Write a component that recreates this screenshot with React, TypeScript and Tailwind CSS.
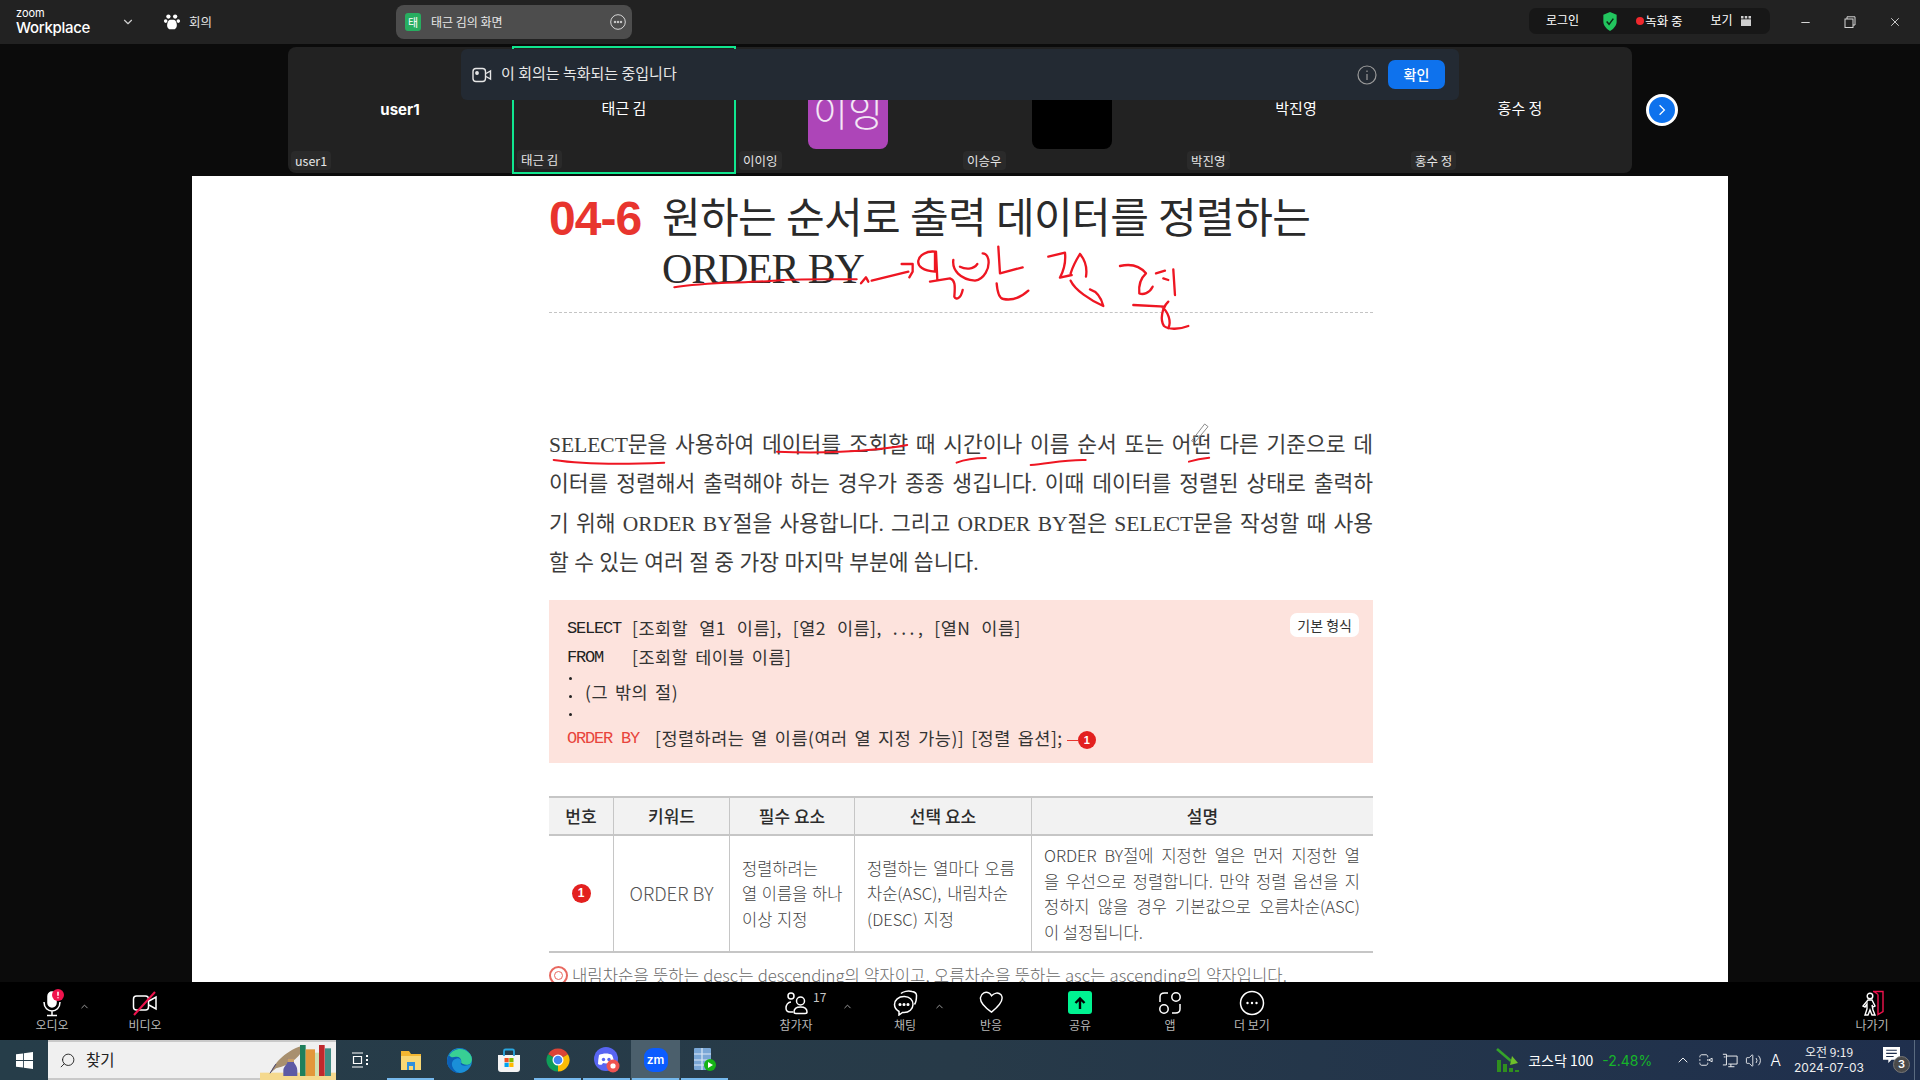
import { ChevronDown, ChevronUp, Search, Volume2, Minus, X } from "lucide-react";
import type { ReactNode } from "react";

const UI = "font-['Noto_Sans_CJK_KR','Noto_Sans',sans-serif]";
const BOOK = "font-['Liberation_Serif','Noto_Sans_CJK_KR',serif]";
const MONO = "font-['Liberation_Mono','Noto_Sans_CJK_KR',monospace]";
const CODE_KR = "font-['Noto_Sans_CJK_KR'] text-[17.5px] tracking-[0.5px] [word-spacing:2.5px]";

const tiles = [
  { name: "user1", label: "user1", bold: true },
  { name: "태근 김", label: "태근 김", active: true },
  { name: "", label: "이이잉", avatar: "purple" },
  { name: "", label: "이승우", avatar: "black" },
  { name: "박진영", label: "박진영" },
  { name: "홍수 정", label: "홍수 정" },
];

const bodyLines = [
  "SELECT문을 사용하여 데이터를 조회할 때 시간이나 이름 순서 또는 어떤 다른 기준으로 데",
  "이터를 정렬해서 출력해야 하는 경우가 종종 생깁니다. 이때 데이터를 정렬된 상태로 출력하",
  "기 위해 ORDER BY절을 사용합니다. 그리고 ORDER BY절은 SELECT문을 작성할 때 사용",
];

const descLines = [
  "ORDER BY절에 지정한 열은 먼저 지정한 열",
  "을 우선으로 정렬합니다. 만약 정렬 옵션을 지",
  "정하지 않을 경우 기본값으로 오름차순(ASC)",
];

const TopBar = () => (
  <header className="h-[44px] shrink-0 bg-[#222222] flex items-center text-white">
    <div className="pl-[16px] w-[116px] flex flex-col leading-none">
      <span className="text-[11px] font-['Inter'] leading-[11px]">zoom</span>
      <span className="text-[15px] font-['Inter'] font-medium leading-[17px] -tracking-[0.3px]">Workplace</span>
    </div>
    <ChevronDown className="w-[14px] h-[14px] text-[#cfcfcf] ml-[5px]" />
    <svg viewBox="0 0 20 20" className="w-[18px] h-[18px] ml-[28px] fill-white">
      <circle cx="6" cy="4" r="2.4" />
      <circle cx="13.5" cy="4" r="2.4" />
      <circle cx="3" cy="9" r="2" />
      <circle cx="17" cy="9" r="2" />
      <path d="M6 9c0-2 8-2 8 0 2 3 2 8-1 9H7c-3-1-3-6-1-9z" />
    </svg>
    <span className="ml-[8px] text-[12.5px] text-[#e4e4e4]">회의</span>
    <div className="ml-[184px] w-[236px] h-[34px] rounded-[8px] bg-[#4d4d4d] flex items-center px-[9px]">
      <span className="w-[16px] h-[18px] rounded-[3px] bg-[#27ae60] text-[11px] flex items-center justify-center">태</span>
      <span className="ml-[10px] text-[12px] text-[#e8e8e8] flex-1">태근 김의 화면</span>
      <svg viewBox="0 0 16 16" className="w-[16px] h-[16px] -mr-[3px] fill-none stroke-[#d8d8d8]">
        <circle cx="8" cy="8" r="7.3" />
        <circle cx="5" cy="8" r="0.8" fill="#d8d8d8" />
        <circle cx="8" cy="8" r="0.8" fill="#d8d8d8" />
        <circle cx="11" cy="8" r="0.8" fill="#d8d8d8" />
      </svg>
    </div>
    <div className="ml-[897px] w-[241px] h-[26px] rounded-[7px] bg-[#171717] flex items-center text-[12px] pl-[17px] -mt-[2px]">
      <span className="-mt-[2px]">로그인</span>
      <svg viewBox="0 0 16 20" className="w-[16px] h-[19px] ml-[23px]">
        <path d="M8 0l7 3v7c0 5-4 8-7 10-3-2-7-5-7-10V3z" fill="#22c55e" />
        <path d="M4.5 10l2.5 3 4.5-6" fill="none" stroke="#0b2b16" strokeWidth="1.6" />
      </svg>
      <span className="w-[8px] h-[8px] rounded-full bg-[#f0282d] ml-[18px]" />
      <span className="ml-[1px] text-[12.5px]">녹화 중</span>
      <span className="ml-[28px] -mt-[2px]">보기</span>
      <svg viewBox="0 0 12 12" className="w-[10px] h-[12px] ml-[8px] fill-[#cfcfcf]">
        <rect x="0" y="4" width="12" height="8" />
        <rect x="0" y="0" width="3" height="3" />
        <rect x="4.5" y="0" width="3" height="3" />
        <rect x="9" y="0" width="3" height="3" />
      </svg>
    </div>
    <Minus className="w-[13px] h-[13px] ml-[29px] text-[#d5d5d5]" />
    <svg viewBox="0 0 12 12" className="w-[12px] h-[12px] ml-[32px] fill-none stroke-[#d5d5d5]">
      <rect x="1" y="3" width="8" height="8.5" />
      <path d="M3 3V0.8h8V9H9" />
    </svg>
    <X className="w-[14px] h-[14px] ml-[32px] text-[#e0e0e0]" strokeWidth={1.5} />
  </header>
);

const Strip = () => (
  <div className="mt-[3px] pl-[288px] flex items-center gap-[14px]">
    <div className="relative w-[1344px] h-[126px] rounded-[8px] bg-[#222222] flex text-white">
      {tiles.map((t) => (
        <div
          key={t.label}
          className={`relative w-[224px] flex items-center justify-center ${t.active ? "border-2 border-[#10e68f] -my-px" : ""}`}
        >
          <div className="absolute left-[3px] bottom-[3px] h-[19px] px-[4px] rounded-[4px] bg-[#2a2a2a] text-[12.5px] leading-[19px] text-[#e6e6e6]">
            {t.label}
          </div>
          {t.avatar === "purple" && (
            <div className="mt-[-2px] w-[80px] h-[80px] rounded-[8px] bg-[#ad45b8] flex items-center justify-center text-[38px] text-[#f3e6f5] font-light">
              이잉
            </div>
          )}
          {t.avatar === "black" && <div className="mt-[-2px] w-[80px] h-[80px] rounded-[8px] bg-black" />}
          {t.name && (
            <span className={`text-[15px] ${t.bold ? "font-bold font-['Inter'] text-[14px] mt-[0px]" : "mt-[-3px]"}`}>{t.name}</span>
          )}
        </div>
      ))}
      <div className="absolute z-10 left-[173px] top-[2px] w-[998px] h-[51px] rounded-[6px] bg-[#232a33] flex items-center pl-[11px] pr-[14px]">
        <svg viewBox="0 0 20 16" className="w-[20px] h-[16px] fill-none stroke-[#e6e6e6]" strokeWidth="1.4">
          <rect x="1" y="1.5" width="12.5" height="13" rx="3" />
          <circle cx="5" cy="6" r="1.2" fill="#e6e6e6" />
          <path d="M14 6.5l4.5-2.5v8L14 9.5" />
        </svg>
        <span className="ml-[9px] -mt-[2px] text-[15px] text-[#e8e8e8] flex-1">이 회의는 녹화되는 중입니다</span>
        <svg viewBox="0 0 20 20" className="w-[20px] h-[20px] fill-none stroke-[#9a9a9a]" strokeWidth="1.2">
          <circle cx="10" cy="10" r="9" />
          <path d="M10 9v6M10 5.5v1.5" />
        </svg>
        <button className="ml-[11px] w-[57px] h-[29px] rounded-[7px] bg-[#0e72ed] text-[14px] font-medium">확인</button>
      </div>
    </div>
    <button className="w-[32px] h-[32px] rounded-full bg-[#0e72ed] border-[3px] border-white flex items-center justify-center">
      <svg viewBox="0 0 10 16" className="w-[8px] h-[14px] fill-none stroke-white" strokeWidth="1.6">
        <path d="M2 2l6 6-6 6" />
      </svg>
    </button>
  </div>
);

// annotation strokes, drawn in zoomed-crop coordinates
const Redpen = () => (
  <svg viewBox="192 176 1536 806" className="absolute inset-0 w-[1536px] h-[806px] pointer-events-none">
    <g fill="none" stroke="#ee1622" strokeLinecap="round" strokeLinejoin="round">
      <g transform="translate(520 170) scale(0.5612 0.3333)">
        <path vectorEffect="non-scaling-stroke" strokeWidth="2" d="M275 352C330 335 400 340 450 332 500 325 560 328 600 328" />
        <path vectorEffect="non-scaling-stroke" strokeWidth="2" d="M60 870C120 885 200 882 257 878M458 845C520 850 620 848 690 825M778 878C790 870 810 864 830 864M910 885C940 882 970 868 1008 870M1192 875C1205 868 1215 865 1228 863" />
        <path vectorEffect="non-scaling-stroke" stroke="#8d8d8d" strokeWidth="1" d="M1197 812L1220 762 1226 770 1203 816z" />
      </g>
      <g transform="translate(860 240) scale(0.3333)" strokeWidth="7">
        <path d="M3 130L18 112 25 125M35 122L145 95M125 72H158V95L148 112" />
        <path d="M225 35C200 32 178 45 175 62 172 80 190 92 225 95V35M228 35L232 120M210 125L270 115C285 120 286 135 283 170 288 180 302 178 308 150" />
        <path d="M280 60C276 90 300 118 345 122 372 118 390 85 385 58 382 45 375 40 368 40M300 80C315 88 340 90 352 72" />
        <path d="M415 20L420 100 488 82M410 130C412 155 418 175 430 177 455 182 480 175 505 152" />
        <path d="M565 50L615 38C618 65 612 90 600 113L635 105M660 42C650 58 640 75 632 100M660 42C675 60 682 85 678 110M632 122C645 150 690 180 730 198 725 178 712 155 690 148" />
        <path d="M780 78C805 72 835 72 858 100 845 112 835 130 838 160 850 165 868 160 878 140M888 100L915 92M910 115L925 120M940 88L945 165M820 195L915 200M925 185C905 205 900 240 912 258 925 270 960 268 985 258M905 200C925 215 935 245 925 265" />
      </g>
    </g>
  </svg>
);

const CodeRow = ({ kw, red, children, kwWidth = "w-[65px]" }: { kw: string; red?: boolean; children: ReactNode; kwWidth?: string }) => (
  <div className="flex items-center h-[29px]">
    <span className={`${kwWidth} shrink-0 text-[17px] tracking-[-1.2px] ${red ? "text-[#e8453c]" : "text-[#222]"}`}>{kw}</span>
    <span className="text-[#333] whitespace-nowrap">{children}</span>
  </div>
);

const Page = () => (
  <section className="relative ml-[192px] mt-[3px] w-[1536px] flex-1 min-h-0 overflow-hidden bg-white pl-[357px]">
    <div className="w-[824px]">
      <div className={`pt-[18px] flex ${BOOK} text-[#2a2a2a]`}>
        <span className="w-[113px] shrink-0 font-['Liberation_Sans'] font-bold text-[48px] leading-[50px] text-[#e8352e] -tracking-[1px]">04-6</span>
        <h1 className="text-[42px] leading-[50px] font-normal -tracking-[0.6px] whitespace-nowrap">
          원하는 순서로 출력 데이터를 정렬하는
          <br />
          <span className="tracking-[-1.2px]">ORDER BY</span>
        </h1>
      </div>
      <div className="mt-[18px] border-t border-dashed border-[#c4c4c4]" />
      <div className={`mt-[113px] ${BOOK} text-[21.5px] leading-[39.3px] font-normal text-[#3c3c3c]`}>
        {bodyLines.map((line) => (
          <p key={line} className="[text-align:justify] [text-align-last:justify]">{line}</p>
        ))}
        <p>할 수 있는 여러 절 중 가장 마지막 부분에 씁니다.</p>
      </div>
      <div className={`relative mt-[17px] h-[163px] bg-[#fde3dd] px-[18px] pt-[14px] ${MONO} text-[15.5px]`}>
        <CodeRow kw="SELECT">
          <span className={`${CODE_KR} [word-spacing:6.5px]`}>[조회할 열1 이름], [열2 이름], <span className="tracking-[3.5px]">...</span>, [열N 이름]</span>
        </CodeRow>
        <CodeRow kw="FROM">
          <span className={CODE_KR}>[조회할 테이블 이름]</span>
        </CodeRow>
        <div className="h-[52px] flex">
          <div className="w-[18px] pt-[5px] pl-[2px] flex flex-col gap-[15px]">
            <span className="w-[3px] h-[3px] rounded-full bg-[#222]" />
            <span className="w-[3px] h-[3px] rounded-full bg-[#222]" />
            <span className="w-[3px] h-[3px] rounded-full bg-[#222]" />
          </div>
          <span className={`${CODE_KR} h-[20px] mt-[10px] leading-[20px] text-[#333]`}>(그 밖의 절)</span>
        </div>
        <CodeRow kw="ORDER BY" red kwWidth="w-[88px]">
          <span className={CODE_KR}>[정렬하려는 열 이름(여러 열 지정 가능)] [정렬 옵션];</span>
          <span className="inline-block w-[11px] h-px bg-[#e8352e] align-middle ml-[4px]" />
          <span className="inline-flex w-[18px] h-[18px] rounded-full bg-[#e3201f] text-white text-[11px] font-bold items-center justify-center align-middle font-['Liberation_Sans']">1</span>
        </CodeRow>
        <span className={`absolute right-[14px] top-[13px] h-[24px] px-[7px] rounded-[7px] bg-white text-[14px] leading-[24px] text-[#333] ${UI}`}>기본 형식</span>
      </div>
      <div className={`mt-[33px] ${UI} text-[#444]`}>
        <div className="grid grid-cols-[65px_116px_125px_177px_341px] h-[40px] bg-[#f2f2f2] border-y-2 border-[#c6c6c6] text-[17px] font-medium text-[#2c2c2c]">
          {["번호", "키워드", "필수 요소", "선택 요소", "설명"].map((h, i) => (
            <div key={h} className={`flex items-center justify-center ${i < 4 ? "border-r border-[#c6c6c6]" : ""}`}>{h}</div>
          ))}
        </div>
        <div className="grid grid-cols-[65px_116px_125px_177px_341px] h-[117px] border-b-2 border-[#c6c6c6] text-[16.5px] leading-[25.6px] font-light">
          <div className="border-r border-[#c6c6c6] flex items-center justify-center">
            <span className="w-[19px] h-[19px] rounded-full bg-[#e3201f] text-white text-[12px] font-bold flex items-center justify-center font-['Liberation_Sans']">1</span>
          </div>
          <div className="border-r border-[#c6c6c6] flex items-center justify-center text-[#555] text-[18.5px]">ORDER BY</div>
          <div className="border-r border-[#c6c6c6] flex items-center pl-[12px] whitespace-nowrap [word-spacing:1px]">
            <div className="mt-[1px]">정렬하려는<br />열 이름을 하나<br />이상 지정</div>
          </div>
          <div className="border-r border-[#c6c6c6] flex items-center pl-[12px] whitespace-nowrap [word-spacing:2px]">
            <div className="mt-[1px]">정렬하는 열마다 오름<br />차순(ASC), 내림차순<br />(DESC) 지정</div>
          </div>
          <div className="flex items-center pl-[12px]">
            <div className="w-[316px] mt-[1px]">
              {descLines.map((line) => (
                <p key={line} className="[text-align:justify] [text-align-last:justify]">{line}</p>
              ))}
              <p>이 설정됩니다.</p>
            </div>
          </div>
        </div>
        <div className="mt-[10px] flex items-center gap-[4px] text-[16.7px] [word-spacing:0.5px] font-light text-[#6a6a6a] leading-[24px] whitespace-nowrap">
          <span className="w-[19px] h-[19px] rounded-full border-2 border-[#e8685f] flex items-center justify-center">
            <span className="w-[9px] h-[9px] rounded-full border border-[#e8685f]" />
          </span>
          내림차순을 뜻하는 desc는 descending의 약자이고, 오름차순을 뜻하는 asc는 ascending의 약자입니다.
        </div>
      </div>
    </div>
    <Redpen />
  </section>
);

const Tool = ({ icon, label, className = "" }: { icon: ReactNode; label: string; className?: string }) => (
  <div className={`w-[60px] h-[58px] flex flex-col items-center shrink-0 ${className}`}>
    <div className="h-[36px] flex items-center justify-center pt-[5px]">{icon}</div>
    <span className="text-[12px] leading-[14px] text-[#b8b8b8]">{label}</span>
  </div>
);

const Caret = ({ className = "" }: { className?: string }) => (
  <ChevronUp className={`w-[11px] h-[11px] text-[#a8a8a8] -mt-[10px] shrink-0 ${className}`} strokeWidth={2} />
);

const Toolbar = () => (
  <div className={`relative h-[58px] shrink-0 bg-black flex items-center text-white ${UI}`}>
    <Tool
      className="ml-[22px]"
      label="오디오"
      icon={
        <svg viewBox="0 0 24 28" className="w-[24px] h-[28px] fill-none stroke-white" strokeWidth="1.5">
          <rect x="8" y="3" width="8" height="15" rx="4" fill="#fff" />
          <path d="M4 13c0 6 4 9 8 9s8-3 8-9M12 22v4M7 26.5h10" />
          <circle cx="18" cy="6" r="6" fill="#f0134d" stroke="none" />
          <path d="M18 2.8v4M18 8.2v1" stroke="#fff" strokeWidth="1.5" />
        </svg>
      }
    />
    <Caret className="ml-[-3px]" />
    <Tool
      className="ml-[25px]"
      label="비디오"
      icon={
        <svg viewBox="0 0 26 26" className="w-[26px] h-[26px] fill-none stroke-white" strokeWidth="1.5">
          <rect x="1.5" y="6" width="15" height="14" rx="3" />
          <path d="M17 11l7-4v12l-7-4" />
          <path d="M2 25L23 2" stroke="#f0134d" strokeWidth="2" />
        </svg>
      }
    />
    <Tool
      className="ml-[591px]"
      label="참가자"
      icon={
        <span className="relative">
          <svg viewBox="0 0 24 24" className="w-[24px] h-[24px] fill-none stroke-white" strokeWidth="1.5">
            <circle cx="7" cy="5" r="3" />
            <circle cx="16.5" cy="10" r="4" />
            <path d="M7 11c-3 0-5 3-5 6s1.500 4 4 4h3M10 21c0-3 2-5 6.500-5S23 18 23 21c0 1-1 1.500-2 1.500H12c-1 0-2-.5-2-1.500z" />
          </svg>
          <span className="absolute left-[29px] -top-[3px] text-[12px] text-[#c8c8c8]">17</span>
        </span>
      }
    />
    <Caret className="ml-[16px]" />
    <Tool
      className="ml-[22px]"
      label="채팅"
      icon={
        <svg viewBox="0 0 26 26" className="w-[26px] h-[26px] fill-none stroke-white" strokeWidth="1.5">
          <path d="M12 6.500c-5.500 0-9.500 3.500-9.500 8 0 3 2 5.500 4.500 7v3.500l3.500-2.500h1.500c5 0 9-3.500 9-8s-3.500-8-8.500-8z" />
          <path d="M9 3.500c2-2 7-3 11-2 3 .5 4.500 2 4.500 4 0 3-.5 7-2 9" />
          <circle cx="8" cy="14.500" r=".8" fill="#fff" />
          <circle cx="12" cy="14.500" r=".8" fill="#fff" />
          <circle cx="16" cy="14.500" r=".8" fill="#fff" />
        </svg>
      }
    />
    <Caret className="ml-[-1px]" />
    <Tool
      className="ml-[16px]"
      label="반응"
      icon={
        <svg viewBox="0 0 26 24" className="w-[25px] h-[23px] fill-none stroke-white" strokeWidth="1.5">
          <path d="M5 2c4-2 7 1 8 3 3-3 7-4 10-1 3 4 1 9-10 18C6 17 1 11 1.500 7 2 4 3 3 5 2z" />
        </svg>
      }
    />
    <Tool
      className="ml-[29px]"
      label="공유"
      icon={
        <span className="w-[24px] h-[23px] rounded-[3px] bg-[#00f391] flex items-center justify-center">
          <svg viewBox="0 0 14 14" className="w-[14px] h-[14px] fill-none stroke-black" strokeWidth="2.4">
            <path d="M7 13V3M2.500 7L7 2.500 11.500 7" />
          </svg>
        </span>
      }
    />
    <Tool
      className="ml-[30px]"
      label="앱"
      icon={
        <svg viewBox="0 0 24 24" className="w-[24px] h-[24px] fill-none stroke-white" strokeWidth="1.5">
          <path d="M2 11V6c0-2.500 2-4 4.500-4H10" />
          <circle cx="18" cy="6" r="4.200" />
          <circle cx="6" cy="18" r="4.200" />
          <path d="M22 13v5c0 2.500-2 4-4.500 4H14" />
        </svg>
      }
    />
    <Tool
      className="ml-[22px]"
      label="더 보기"
      icon={
        <svg viewBox="0 0 26 26" className="w-[26px] h-[26px] fill-none stroke-white" strokeWidth="1.5">
          <circle cx="13" cy="13" r="11.500" />
          <circle cx="8.500" cy="13" r="1.200" fill="#fff" stroke="none" />
          <circle cx="13" cy="13" r="1.200" fill="#fff" stroke="none" />
          <circle cx="17.500" cy="13" r="1.200" fill="#fff" stroke="none" />
        </svg>
      }
    />
    <Tool
      className="ml-auto mr-[18px]"
      label="나가기"
      icon={
        <svg viewBox="0 0 26 26" className="w-[26px] h-[26px] fill-none stroke-white" strokeWidth="1.4">
          <path d="M14 1.500h10v20l-5 3V4.500M15 1.500l4 3" stroke="#f0134d" />
          <circle cx="11" cy="6" r="2.800" />
          <path d="M9 10h4l3 6-2 1-1-2 1 5 2 5h-3l-2-5-2 5H6l2-6v-5l-2 3-2-1z" fill="#000" />
        </svg>
      }
    />
  </div>
);

const Books = () => (
  <svg viewBox="0 0 228 120" className="absolute right-0 -bottom-[2px] w-[76px] h-[40px]">
    <rect x="0" y="98" width="228" height="22" fill="#f5d98e" />
    <path d="M30 100C42 70 80 28 135 15 125 45 95 75 48 85z" fill="#a8906f" />
    <path d="M30 100L48 72" stroke="#4a4a7a" strokeWidth="3" fill="none" />
    <path d="M70 108V92C70 80 80 74 82 68V55H102V68C106 74 112 80 112 92V108z" fill="#5d5aa4" />
    <rect x="82" y="55" width="20" height="11" fill="#c9a268" />
    <rect x="120" y="15" width="17" height="93" fill="#1f7f5c" />
    <rect x="137" y="28" width="28" height="80" fill="#e2973a" />
    <rect x="165" y="38" width="12" height="70" fill="#cfe0b0" />
    <rect x="177" y="15" width="17" height="93" fill="#c0282c" />
    <rect x="195" y="25" width="18" height="83" fill="#3f8c84" />
  </svg>
);

const TaskIcon = ({ children, on, active }: { children: ReactNode; on?: boolean; active?: boolean }) => (
  <div className={`relative w-[49px] h-[40px] shrink-0 flex items-center justify-center ${active ? "bg-[#4b5f6c]" : ""}`}>
    {children}
    {on && <span className="absolute left-[1px] right-[1px] bottom-0 h-[2px] bg-[#76b9ed]" />}
  </div>
);

const Taskbar = () => (
  <div className={`relative h-[40px] shrink-0 bg-gradient-to-r from-[#263d49] via-[#273a48] to-[#1f2f4d] flex items-center text-white ${UI}`}>
    <div className="w-[48px] flex justify-center">
      <svg viewBox="0 0 18 18" className="w-[17px] h-[17px] fill-white">
        <path d="M0 2.500l7.400-1v7H0zM8.300 1.400L18 0v8.500H8.300zM0 9.500h7.400v7L0 15.500zM8.300 9.500H18V18l-9.700-1.400z" />
      </svg>
    </div>
    <div className="relative w-[288px] h-[40px] bg-[#f0f0f0] border-t-2 border-b-2 border-[#c9c9c9] flex items-center pl-[11px] text-[#222]">
      <Search className="w-[17px] h-[17px] -scale-x-100" strokeWidth={1.3} />
      <span className="ml-[10px] text-[15.5px]">찾기</span>
      <Books />
    </div>
    <div className="w-[48px] flex justify-center">
      <svg viewBox="0 0 16 16" className="w-[16px] h-[16px] fill-none stroke-white" strokeWidth="1.200">
        <path d="M0 1h11M0 15h11M1.500 4.500h8v7h-8z" />
        <path d="M14 4h2M14 8h2M14 12h2" strokeWidth="2" />
      </svg>
    </div>
    <div className="flex ml-[2px]">
      <TaskIcon on>
        <svg viewBox="0 0 24 24" className="w-[24px] h-[24px]">
          <path d="M2 3h8l2 3h10v8H2z" fill="#f2b632" />
          <rect x="2" y="8" width="20" height="14" fill="#f8d775" />
          <rect x="8" y="14" width="8" height="8" fill="#2e8fdc" />
          <rect x="10" y="18" width="4" height="4" fill="#f8d775" />
        </svg>
      </TaskIcon>
      <TaskIcon>
        <svg viewBox="0 0 24 24" className="w-[25px] h-[25px]">
          <circle cx="12" cy="12" r="12" fill="#1a8fd8" />
          <path d="M0 12C1 4 8 0 14 .5c6 .8 10 6 10 11.500 0 3-3 5-7 5-3 0-4.500-1.500-3.500-3 .8-2-1-4.500-4-4-4 .8-5.500 4-4.500 7.500 1.200 3.500 4 6 7 6.500C6 24.500 0 19 0 12z" fill="#0c5fb5" />
          <path d="M2 7C6 0 16-1.500 21.500 5c3.500 4 3 9 0 10.500-3 1.200-6.500.5-8-1.500 1-3-1.500-6-5-5.500C5.500 9 4 9.500 2 7z" fill="#38cf94" />
        </svg>
      </TaskIcon>
      <TaskIcon>
        <svg viewBox="0 0 24 24" className="w-[24px] h-[24px]">
          <path d="M1 7h22v14a3 3 0 0 1-3 3H4a3 3 0 0 1-3-3z" fill="#f4f4f4" />
          <path d="M7 8V3a1.500 1.500 0 0 1 1.500-1.500h7A1.500 1.500 0 0 1 17 3v5" fill="none" stroke="#2aa7e0" strokeWidth="1.800" />
          <rect x="7.500" y="10" width="4.200" height="4.200" fill="#f25022" />
          <rect x="12.300" y="10" width="4.200" height="4.200" fill="#7fba00" />
          <rect x="7.500" y="14.800" width="4.200" height="4.200" fill="#00a4ef" />
          <rect x="12.300" y="14.800" width="4.200" height="4.200" fill="#ffb900" />
        </svg>
      </TaskIcon>
      <TaskIcon on>
        <svg viewBox="0 0 24 24" className="w-[24px] h-[24px]">
          <path d="M12 12L21.960 6.250A11.500 11.500 0 0 0 2.040 6.250z" fill="#db4437" />
          <path d="M12 12L2.040 6.250A11.500 11.500 0 0 0 12 23.500z" fill="#0f9d58" />
          <path d="M12 12V23.500A11.500 11.500 0 0 0 21.960 6.250z" fill="#fbbc05" />
          <circle cx="12" cy="12" r="5.500" fill="#fff" />
          <circle cx="12" cy="12" r="4.300" fill="#4285f4" />
        </svg>
      </TaskIcon>
      <TaskIcon on>
        <svg viewBox="0 0 26 26" className="w-[26px] h-[26px]">
          <circle cx="12" cy="12" r="12" fill="#5865f2" />
          <path d="M5 8c4-2 10-2 13 0 1.500 3 2 6 2 9-2 1-3 1-4 .5l-1-1.500c-2 .6-4 .6-6 0l-1 1.500c-1 .5-2.500.5-4-.5 0-3 .5-6 1-9z" fill="#fff" />
          <circle cx="9.500" cy="12.500" r="1.700" fill="#5865f2" />
          <circle cx="15" cy="12.500" r="1.700" fill="#5865f2" />
          <circle cx="19" cy="19" r="6.500" fill="#ef5350" />
          <rect x="16.500" y="16.500" width="5" height="5" rx="1.800" fill="#fff" />
        </svg>
      </TaskIcon>
      <TaskIcon on active>
        <span className="w-[24px] h-[24px] rounded-[9px] bg-[#0b5cff] text-[12px] font-['Inter'] font-semibold flex items-center justify-center">zm</span>
      </TaskIcon>
      <TaskIcon on>
        <svg viewBox="0 0 24 26" className="w-[24px] h-[26px]">
          <rect x="1" y="1" width="17" height="22" rx="1" fill="#7aa7d6" />
          <path d="M1 7h17M1 13h17M1 18h17M9 1v22" stroke="#dbe8f5" strokeWidth="1.200" />
          <circle cx="17" cy="18" r="6" fill="#16b316" />
          <path d="M15 15l5 3-5 3z" fill="#fff" />
        </svg>
      </TaskIcon>
    </div>
    <div className="ml-auto flex items-center pr-[5px]">
      <svg viewBox="0 0 24 24" className="w-[24px] h-[24px]">
        <path d="M1 1l14 12" stroke="#35a32a" strokeWidth="2.600" fill="none" />
        <path d="M16 8l6 7-8 2z" fill="#6fbf2a" />
        <rect x="1" y="12" width="4" height="12" fill="#2f8f1e" />
        <rect x="7" y="16" width="4" height="8" fill="#2f8f1e" />
        <rect x="13" y="20" width="4" height="4" fill="#2f8f1e" />
        <rect x="19" y="22" width="4" height="2" fill="#2f8f1e" />
      </svg>
      <span className="ml-[8px] text-[14px] font-['Noto_Sans_CJK_KR']">코스닥 100</span>
      <span className="ml-[9px] text-[14px] text-[#16b52a] font-['Inter']">-2.48%</span>
      <ChevronUp className="ml-[23px] w-[16px] h-[16px] text-white" strokeWidth={1.400} />
      <svg viewBox="0 0 16 16" className="ml-[8px] w-[14px] h-[14px] fill-none stroke-white">
        <path d="M1 5V4c0-1 1-2 2-2h5c1 0 2 1 2 2v1M1 11v1c0 1 1 2 2 2h5c1 0 2-1 2-2v-1M1 7v2M10 7v2M11 8l4-2v4z" />
      </svg>
      <svg viewBox="0 0 18 16" className="ml-[9px] w-[16px] h-[15px] fill-none stroke-white">
        <path d="M1 1h4v12H1M5 3h12v9H7M10 12v3M7 15h7M2 4h2" />
      </svg>
      <Volume2 className="ml-[7px] w-[17px] h-[17px] text-white" strokeWidth={1.200} />
      <span className="ml-[8px] text-[16px] font-['Inter'] font-light">A</span>
      <div className="ml-[13px] w-[70px] text-center text-[12px] leading-[16px] font-['Inter'] text-[#eee]">
        <div className={UI}>오전 9:19</div>
        <div>2024-07-03</div>
      </div>
      <div className="relative ml-[17px] w-[30px] h-[30px]">
        <svg viewBox="0 0 16 16" className="absolute left-[2px] top-[2px] w-[17px] h-[17px] fill-white">
          <path d="M0 0h16v12H8l-3 3v-3H0z" />
          <path d="M3 3h10M3 6h10M3 9h7" stroke="#1f2f4d" />
        </svg>
        <span className="absolute right-[1px] bottom-[2px] w-[17px] h-[17px] rounded-full bg-[#4a4a4a] border border-[#777] text-[11px] font-['Inter'] font-semibold flex items-center justify-center">3</span>
      </div>
      <span className="ml-[3px] w-px h-[40px] bg-[#5a6b80]" />
    </div>
  </div>
);

const App = () => (
  <div className={`w-[1920px] h-[1080px] overflow-hidden flex flex-col bg-[#0b0b0b] ${UI}`}>
    <TopBar />
    <Strip />
    <Page />
    <Toolbar />
    <Taskbar />
  </div>
);

export default App;
